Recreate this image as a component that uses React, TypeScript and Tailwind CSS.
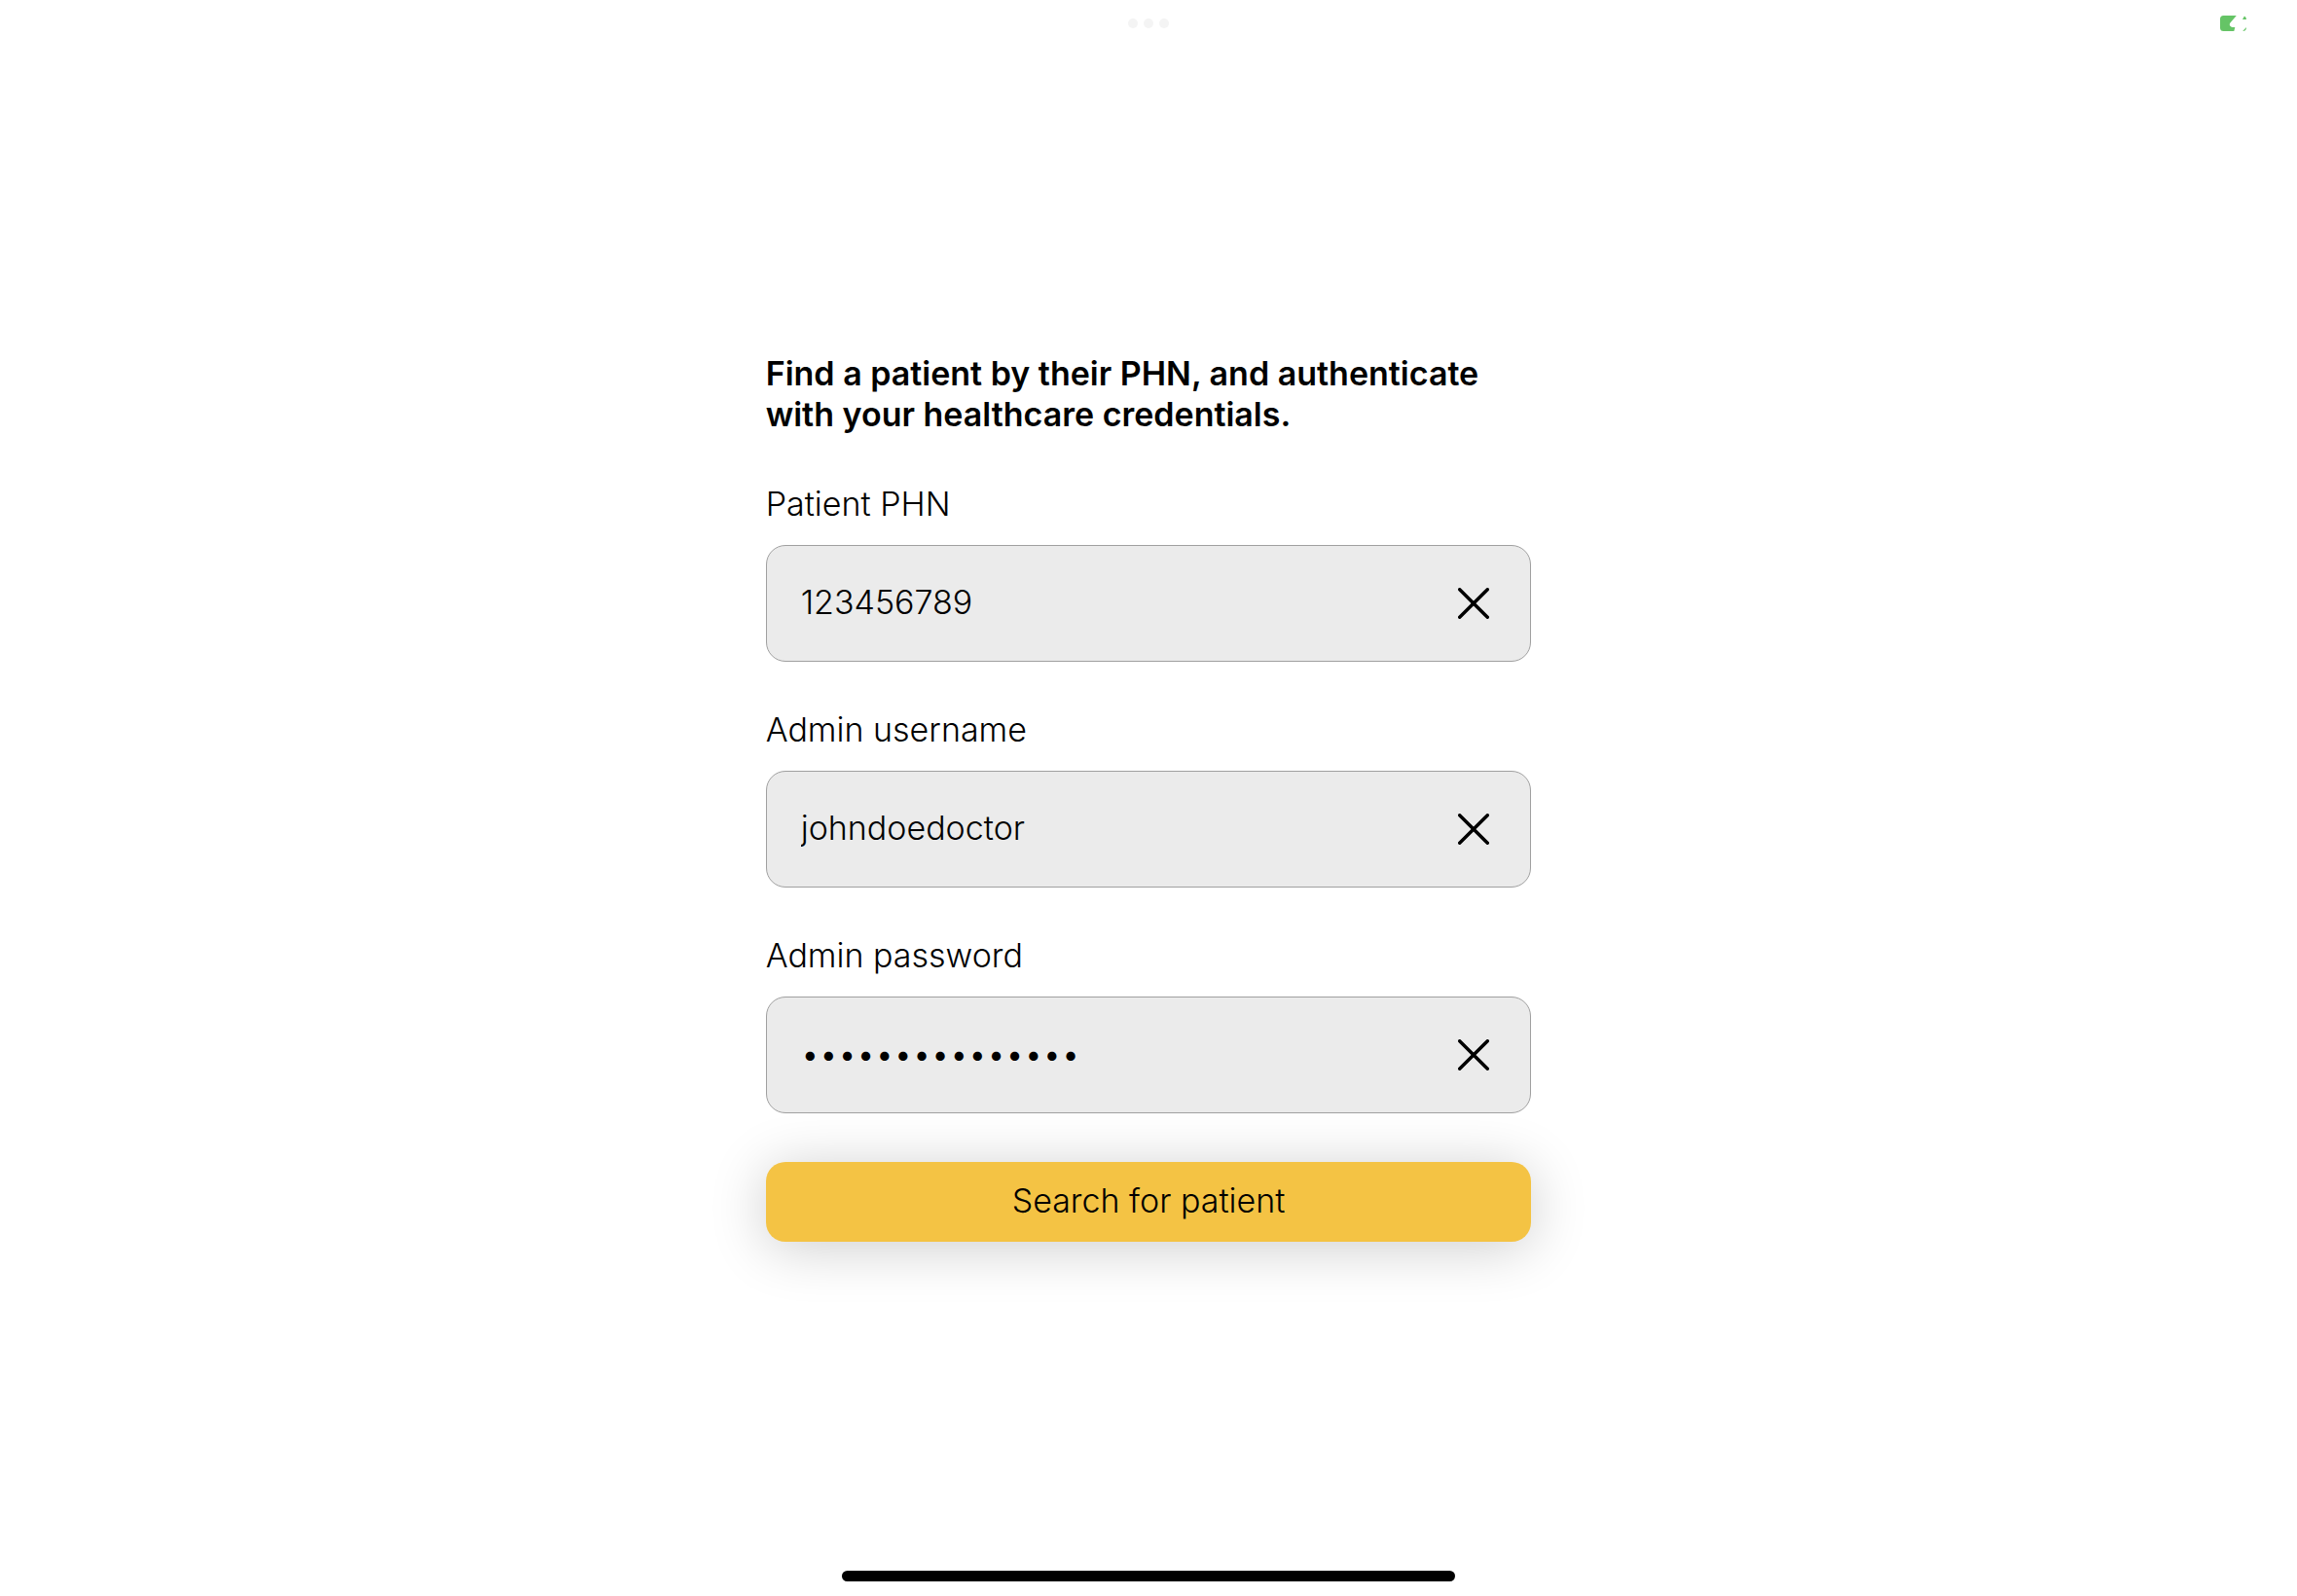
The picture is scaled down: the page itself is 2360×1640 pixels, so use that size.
import { useState } from "react";

type FieldProps = {
  id: string;
  label: string;
  type?: string;
  initial: string;
};

function Field({ id, label, type = "text", initial }: FieldProps) {
  const [value, setValue] = useState(initial);
  return (
    <div className="flex flex-col gap-[21px]">
      <label htmlFor={id} className="block">
        {label}
      </label>
      <div className="flex h-[120px] items-center rounded-[20px] border border-[#a0a0a0] bg-[#ebebeb] pr-[26px] pl-[35px]">
        <input
          id={id}
          type={type}
          autoComplete="off"
          value={value}
          onChange={(e) => setValue(e.target.value)}
          className="min-w-0 flex-1 bg-transparent pb-0.5 outline-none"
        />
        <button
          type="button"
          aria-label={`Clear ${label}`}
          onClick={() => setValue("")}
          className="flex size-16 items-center justify-center"
        >
          <svg viewBox="0 0 32 32" className="size-8" fill="none" stroke="black" strokeWidth="3.4" strokeLinecap="round">
            <path d="M1.7 1.7 30.3 30.3M30.3 1.7 1.7 30.3" />
          </svg>
        </button>
      </div>
    </div>
  );
}

export default function App() {
  return (
    <div className="relative flex min-h-screen flex-col items-center justify-center bg-white font-['Inter',sans-serif] text-[34px] leading-[42px] font-light text-black">
      <header className="absolute inset-x-0 top-0 flex h-12 items-center justify-center">
        <button type="button" aria-label="Window options" className="flex gap-1.5">
          <span className="size-2.5 rounded-full bg-[#f4f4f4]" />
          <span className="size-2.5 rounded-full bg-[#f4f4f4]" />
          <span className="size-2.5 rounded-full bg-[#f4f4f4]" />
        </button>
        <svg viewBox="0 0 27 16" className="absolute right-[52px] h-4 w-[27px]" fill="#65c466" role="img" aria-label="Battery charging">
          <path d="M3.5 0H16.8L10.4 7.6Q9.3 9 10.2 10.6Q11 12 12.6 12H15.3L14.3 16H3.5Q0 16 0 12.5V3.5Q0 0 3.5 0Z" />
          <path d="M25 .6Q27 1.8 27 4H23Z" />
          <path d="M27 12Q27 16 23.2 16Z" />
        </svg>
      </header>

      <form className="flex w-1/3 flex-col gap-[50px] pb-0.5" onSubmit={(e) => e.preventDefault()}>
        <h1 className="font-semibold">
          Find a patient by their PHN, and authenticate with your healthcare credentials.
        </h1>
        <div className="flex flex-col gap-[49px]">
          <Field id="phn" label="Patient PHN" initial="123456789" />
          <Field id="username" label="Admin username" initial="johndoedoctor" />
          <Field id="password" label="Admin password" type="password" initial="healthcare12345" />
        </div>
        <button
          type="submit"
          className="rounded-[20px] bg-[#f4c344] pt-[19px] pb-[21px] shadow-[0_6px_58px_rgba(0,0,0,0.2)]"
        >
          Search for patient
        </button>
      </form>

      <div className="absolute bottom-[15px] h-[11px] w-[630px] rounded-full bg-black" />
    </div>
  );
}
